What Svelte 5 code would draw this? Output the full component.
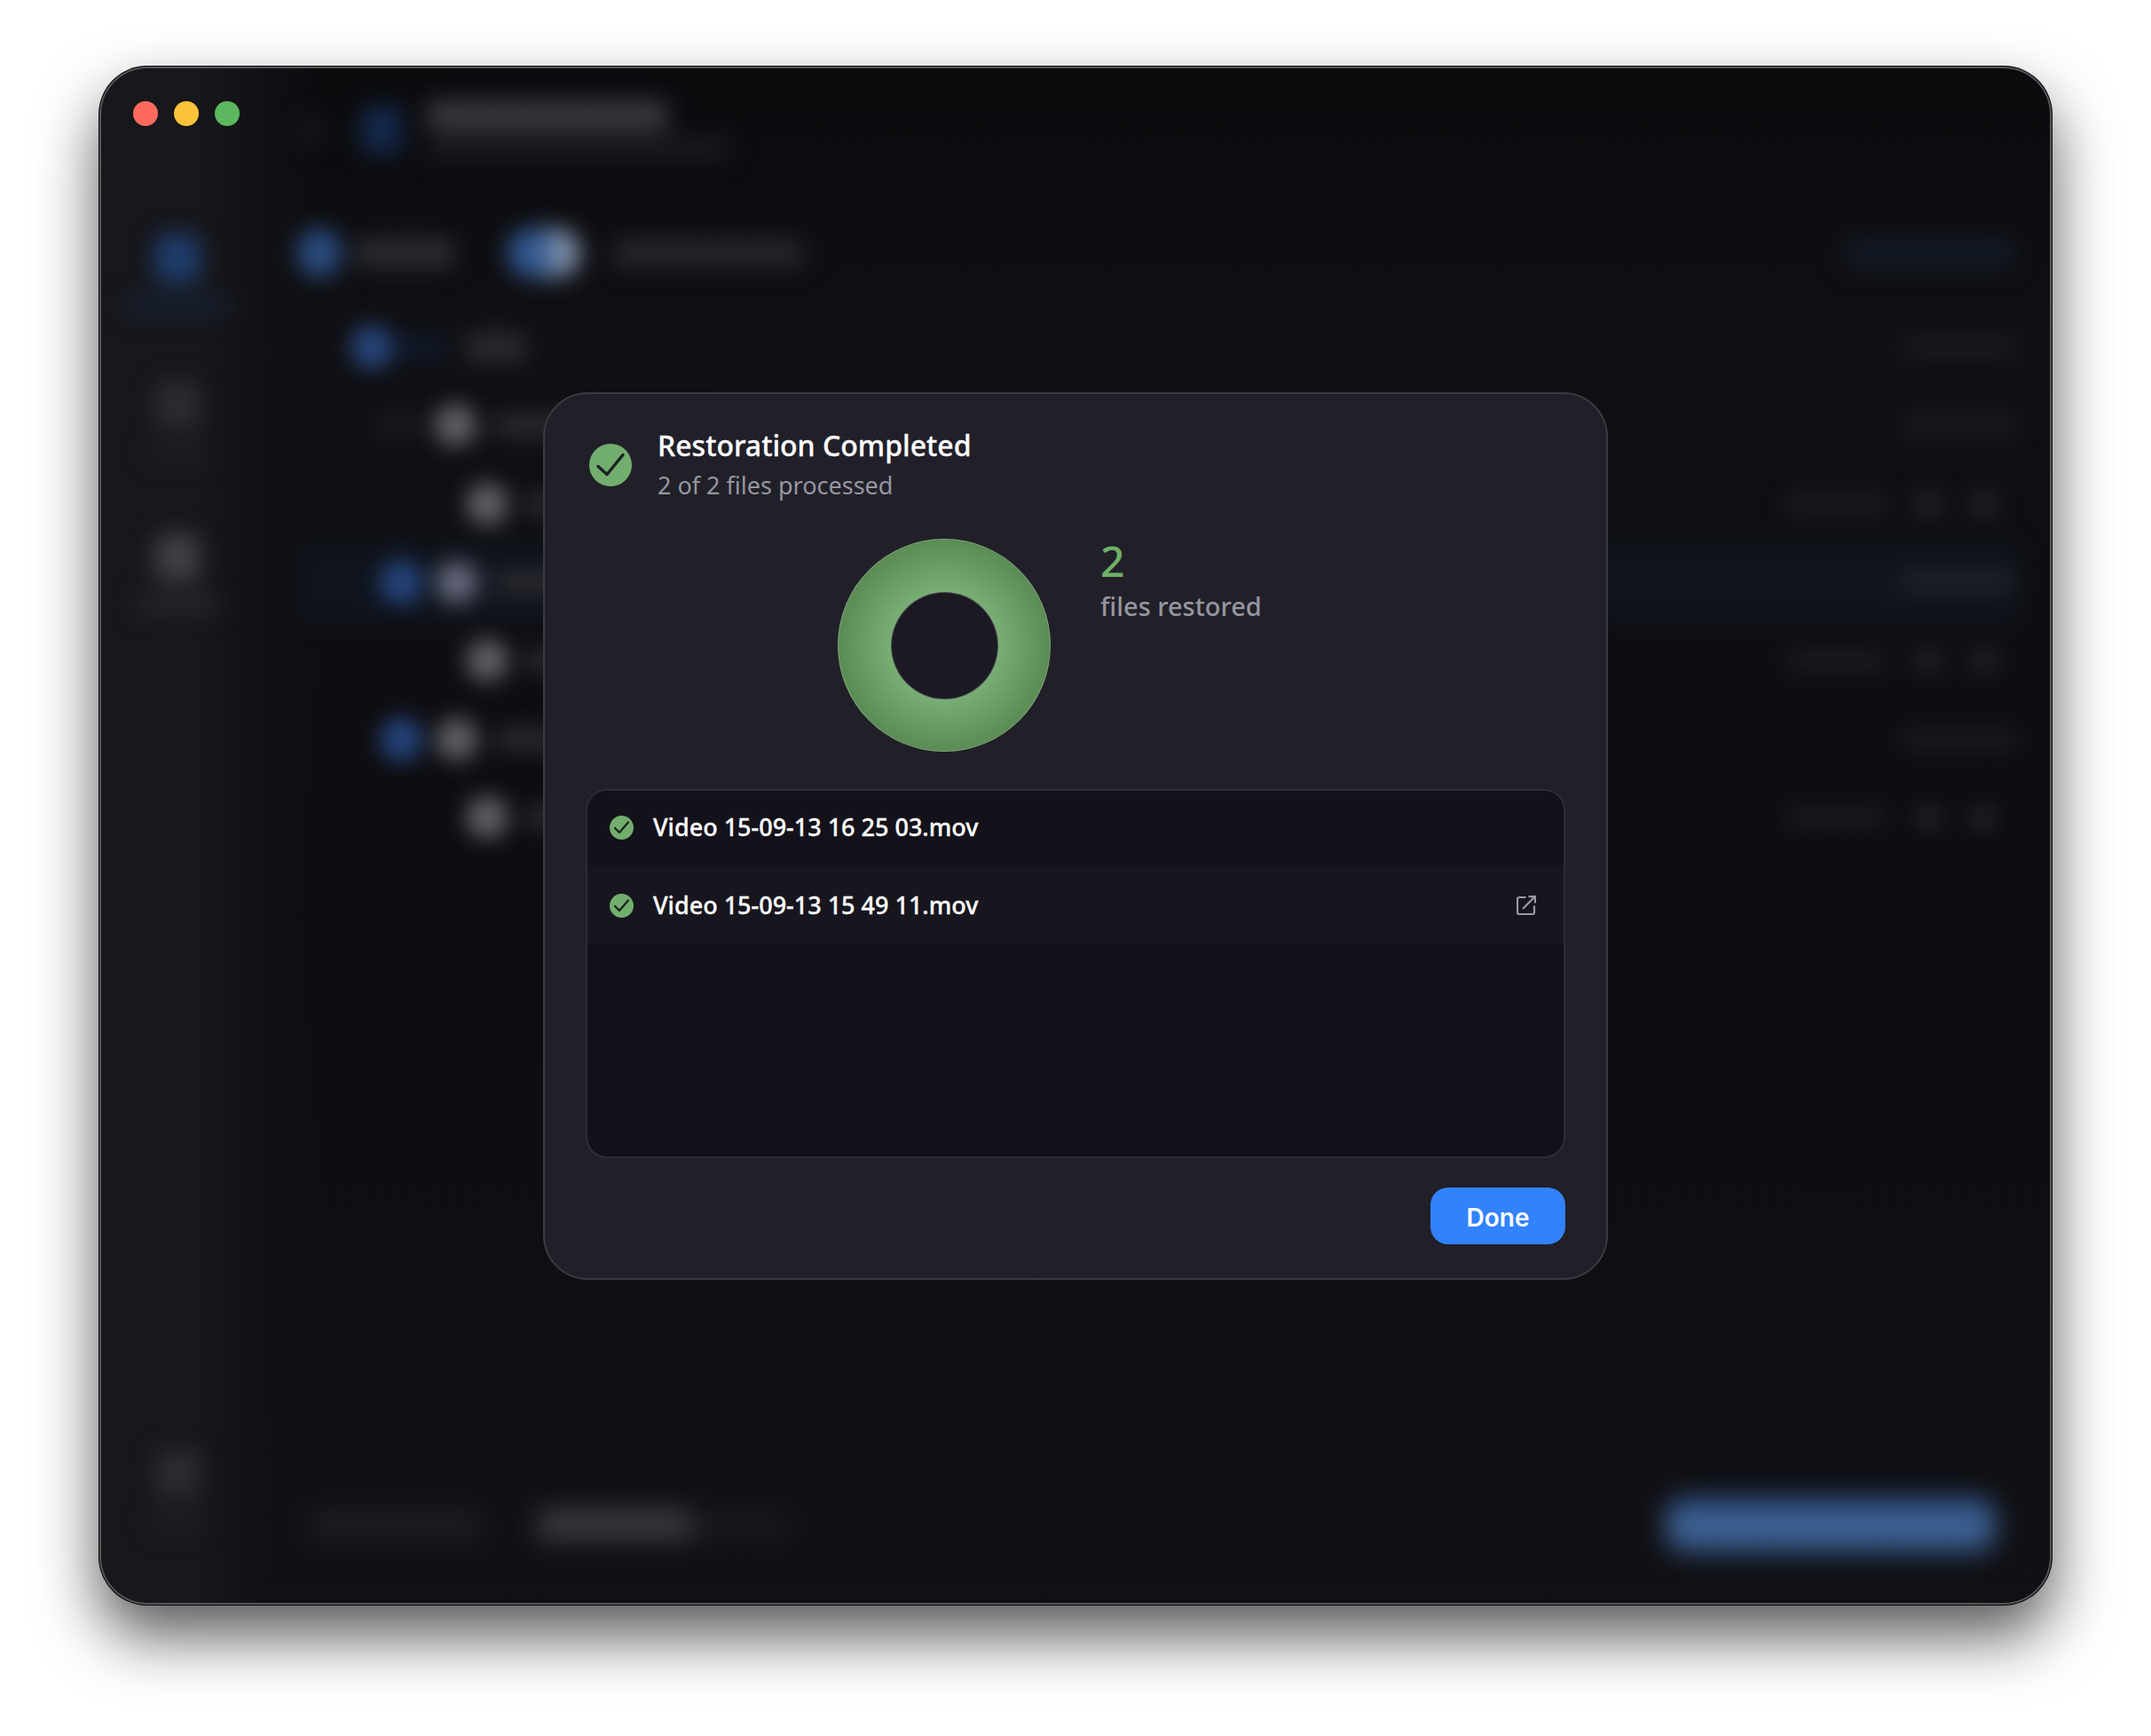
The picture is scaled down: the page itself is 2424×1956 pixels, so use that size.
<script lang="ts">
  const files = [
    { name: "Video 15-09-13 16 25 03.mov", open: false },
    { name: "Video 15-09-13 15 49 11.mov", open: true },
  ];

  // blurred tree behind the dialog
  const rows = [
    { pad: 72, kind: "root" },
    { pad: 100, kind: "folder", blue: false },
    { pad: 202, kind: "file" },
    { pad: 93, kind: "folder", blue: true, active: true },
    { pad: 202, kind: "file" },
    { pad: 105, kind: "folder", blue: true },
    { pad: 202, kind: "file" },
  ];
</script>

<div class="page">
  <div class="window">
    <aside class="sidebar">
      <div class="lights">
        <span class="light red"></span>
        <span class="light yellow"></span>
        <span class="light green"></span>
      </div>
      <nav class="nav">
        <div class="nav-item">
          <span class="nav-icon blue"></span>
          <span class="nav-label blue"></span>
        </div>
        <div class="nav-item faint">
          <span class="nav-icon"></span>
          <span class="nav-label"></span>
        </div>
        <div class="nav-item third">
          <span class="nav-icon"></span>
          <span class="nav-label"></span>
        </div>
        <div class="nav-item bottom faint">
          <span class="nav-icon"></span>
          <span class="nav-label"></span>
        </div>
      </nav>
    </aside>

    <main class="main">
      <header class="header">
        <span class="chevron"></span>
        <span class="header-icon"></span>
        <div class="header-text">
          <span class="bar title-bar"></span>
          <span class="bar sub-bar"></span>
        </div>
      </header>

      <div class="toolbar">
        <span class="tool-icon"></span>
        <span class="bar tool-text"></span>
        <span class="toggle"></span>
        <span class="bar tool-text long"></span>
        <span class="bar tool-action"></span>
      </div>

      <div class="tree">
        {#each rows as row}
          <div class="row" class:active={row.active} style="padding-left: {row.pad}px">
            {#if row.kind === "root"}
              <span class="tree-blue"></span>
              <span class="bar root-link"></span>
              <span class="root-thumb"></span>
              <span class="bar size"></span>
            {:else if row.kind === "folder"}
              {#if row.blue}
                <span class="tree-blue small"></span>
              {:else}
                <span class="bar folder-arrow"></span>
              {/if}
              <span class="thumb"></span>
              <span class="bar name"></span>
              <span class="bar size"></span>
            {:else}
              <span class="thumb"></span>
              <span class="bar name"></span>
              <span class="bar date"></span>
              <span class="dot"></span>
              <span class="dot"></span>
            {/if}
          </div>
        {/each}
      </div>

      <footer class="footer">
        <span class="bar foot-a"></span>
        <span class="bar foot-b"></span>
        <span class="bar foot-c"></span>
        <span class="foot-button"></span>
      </footer>
    </main>

    <div class="overlay">
      <section class="dialog">
        <div class="dialog-head">
          <svg class="head-check" viewBox="0 0 48 48" aria-hidden="true">
            <circle cx="24" cy="24" r="24" fill="#72ae6d" />
            <path d="M10 25.5 20 34.5 38 12.5" fill="none" stroke="#1c2226" stroke-width="3.5" stroke-linecap="round" stroke-linejoin="round" />
          </svg>
          <div>
            <h1>Restoration Completed</h1>
            <p>2 of 2 files processed</p>
          </div>
        </div>

        <div class="summary">
          <div class="donut"><span class="hole"></span></div>
          <div class="stat">
            <strong>2</strong>
            <span>files restored</span>
          </div>
        </div>

        <ul class="files">
          {#each files as file}
            <li class="file" class:open={file.open}>
              <svg class="file-check" viewBox="0 0 27 27" aria-hidden="true">
                <circle cx="13.5" cy="13.5" r="13.5" fill="#72ae6d" />
                <path d="M6 14 11 19 21 7.5" fill="none" stroke="#16201c" stroke-width="2.2" stroke-linecap="round" stroke-linejoin="round" />
              </svg>
              <span class="file-name">{file.name}</span>
              {#if file.open}
                <svg class="file-open" viewBox="0 0 22 22" aria-hidden="true">
                  <path d="M10.5 2H3a2 2 0 0 0-2 2v15a2 2 0 0 0 2 2h15a2 2 0 0 0 2-2v-7.5" fill="none" stroke="currentColor" stroke-width="2.2" />
                  <path d="M7 15 20 2M13.5 1.2H21V8.5" fill="none" stroke="currentColor" stroke-width="2.2" />
                </svg>
              {/if}
            </li>
          {/each}
        </ul>

        <div class="dialog-foot">
          <button type="button" class="done">Done</button>
        </div>
      </section>
    </div>
  </div>
</div>

<style>
  :global(body) {
    margin: 0;
    background: #fff;
  }

  .page {
    width: 2424px;
    height: 1956px;
    padding: 75px 112px 0;
    box-sizing: border-box;
    overflow: hidden;
  }

  .window {
    position: relative;
    display: flex;
    width: 2200px;
    height: 1733px;
    border-radius: 54px;
    overflow: hidden;
    background: #0e0e12;
    box-shadow:
      0 35px 70px rgba(0, 0, 0, 0.66),
      0 0 0 1px #0c0c0e;
  }

  .window::after {
    position: absolute;
    inset: 0;
    border-radius: inherit;
    box-shadow: inset 0 0 0 2px #55555a;
    content: "";
    pointer-events: none;
  }

  /* sidebar */
  .sidebar {
    display: flex;
    flex-direction: column;
    flex: 0 0 184px;
    background: linear-gradient(90deg, #17171c 60%, #111115);
  }

  .lights {
    display: flex;
    gap: 18px;
    padding: 39px 0 0 38px;
  }

  .light {
    width: 28px;
    height: 28px;
    border-radius: 50%;
  }

  .red { background: #ff6a5f; }
  .yellow { background: #fcc33a; }
  .green { background: #5cb85f; }

  .nav {
    display: flex;
    flex: 1;
    flex-direction: column;
    gap: 74px;
    padding: 122px 8px 84px 0;
    filter: blur(13px);
  }

  .nav-item {
    display: flex;
    flex-direction: column;
    align-items: center;
    gap: 15px;
  }

  .third { margin-top: 7px; }
  .bottom { margin-top: auto; }

  .nav-icon {
    width: 50px;
    height: 54px;
    border-radius: 12px;
    background: #414145;
  }

  .nav-icon.blue { background: #1f3e6e; }

  .nav-label {
    width: 90px;
    height: 22px;
    background: #26262b;
  }

  .nav-label.blue { width: 120px; background: #16202f; }

  .faint .nav-icon { background: #2c2c31; }
  .faint .nav-label { width: 64px; background: #1e1e23; }

  /* main */
  .main {
    display: flex;
    flex: 1;
    min-width: 0;
    flex-direction: column;
    background:
      linear-gradient(90deg, #111115, rgba(17, 17, 21, 0) 70px),
      linear-gradient(180deg, #0b0b0e, #101014 18%, #0d0d11 55%, #111115);
  }

  .bar {
    display: block;
    flex: none;
  }

  .header {
    display: flex;
    align-items: center;
    height: 142px;
    padding-left: 47px;
    box-sizing: border-box;
    filter: blur(13px);
  }

  .chevron {
    width: 16px;
    height: 36px;
    background: #1a1a1e;
  }

  .header-icon {
    width: 46px;
    height: 54px;
    margin-left: 48px;
    border-radius: 10px;
    background: #14294c;
  }

  .header-text {
    display: flex;
    flex-direction: column;
    gap: 8px;
    margin-left: 29px;
  }

  .title-bar {
    width: 270px;
    height: 34px;
    background: #3a3a3f;
  }

  .sub-bar {
    width: 340px;
    height: 24px;
    background: #1c1c20;
  }

  .toolbar {
    display: flex;
    align-items: center;
    height: 130px;
    padding: 6px 43px 0 39px;
    box-sizing: border-box;
    filter: blur(13px);
  }

  .tool-icon {
    width: 50px;
    height: 56px;
    border-radius: 50%;
    background: #2b4d82;
  }

  .tool-text {
    width: 109px;
    height: 32px;
    margin-left: 17px;
    background: #2e2e32;
  }

  .tool-text.long {
    width: 213px;
    margin-left: 37px;
    background: #26262b;
  }

  .toggle {
    width: 82px;
    height: 56px;
    margin-left: 61px;
    border-radius: 28px;
    background: linear-gradient(90deg, #2f5893, #34588f 45%, #8193ad 70%);
  }

  .tool-action {
    width: 189px;
    height: 36px;
    margin-left: auto;
    background: #131a25;
  }

  .tree {
    display: flex;
    flex-direction: column;
    padding: 0 39px 0 27px;
    filter: blur(12px);
  }

  .row {
    display: flex;
    align-items: center;
    height: 88.3px;
    box-sizing: border-box;
  }

  .row.active {
    margin-left: 12px;
    background: #0f141d;
  }

  .tree-blue {
    width: 48px;
    height: 50px;
    border-radius: 50%;
    background: #27457a;
  }

  .tree-blue.small {
    margin-right: 15px;
    background: #25447c;
  }

  .root-link {
    width: 56px;
    height: 28px;
    margin: 0 24px 0 3px;
    background: #10192a;
  }

  .root-thumb {
    width: 66px;
    height: 34px;
    background: #2a2a2e;
  }

  .folder-arrow {
    width: 50px;
    height: 26px;
    margin-right: 16px;
    background: #1b1b1f;
  }

  .thumb {
    flex: none;
    width: 48px;
    height: 48px;
    border-radius: 50%;
    background: #5f5f64;
  }

  .active .thumb {
    background: #63677a;
  }

  .name {
    width: 240px;
    height: 26px;
    margin-left: 20px;
    background: #2a2a2e;
  }

  .size {
    width: 130px;
    height: 24px;
    margin-left: auto;
    background: #1b1b1f;
  }

  .active .size { background: #1c212b; }

  .date {
    width: 110px;
    height: 24px;
    margin-left: auto;
    background: #1c1c20;
  }

  .dot {
    flex: none;
    width: 32px;
    height: 32px;
    margin-left: 30px;
    border-radius: 50%;
    background: #222226;
  }

  .date + .dot { margin-left: 33px; }
  .dot:last-child { margin-right: 22px; }

  .footer {
    display: flex;
    align-items: center;
    height: 180px;
    margin-top: auto;
    padding: 0 64px 0 51px;
    box-sizing: border-box;
    filter: blur(15px);
  }

  .foot-a {
    width: 195px;
    height: 30px;
    background: #1f1f23;
  }

  .foot-b {
    width: 172px;
    height: 34px;
    margin-left: 64px;
    background: #3c3c40;
  }

  .foot-c {
    width: 110px;
    height: 24px;
    background: #1c1c20;
  }

  .foot-button {
    width: 370px;
    height: 62px;
    margin-left: auto;
    border-radius: 20px;
    background: linear-gradient(180deg, #264a7e, #46699a 55%, #2c4f82);
  }

  /* dialog */
  .overlay {
    position: absolute;
    inset: 0;
    display: flex;
    align-items: center;
    justify-content: center;
  }

  .dialog {
    display: flex;
    flex-direction: column;
    width: 1200px;
    height: 1000px;
    margin-top: 1px;
    padding: 36px 46px 37px;
    box-sizing: border-box;
    border: 2px solid #3a3a42;
    border-radius: 50px;
    background: #212029;
    font-family: "Noto Sans", sans-serif;
  }

  .dialog-head {
    display: flex;
    align-items: center;
    gap: 29px;
    padding-left: 4px;
  }

  .head-check {
    flex: none;
    width: 48px;
    height: 48px;
    margin-top: 2px;
  }

  h1 {
    margin: 0;
    color: #fff;
    font-size: 32px;
    font-weight: 500;
    line-height: 44px;
    -webkit-text-stroke: 0.3px #fff;
  }

  .dialog-head p {
    margin: 3px 0 0;
    color: #96969f;
    font-size: 27px;
    line-height: 39px;
  }

  .summary {
    display: flex;
    justify-content: center;
    gap: 56px;
    margin-top: 41px;
  }

  .donut {
    position: relative;
    display: flex;
    align-items: center;
    justify-content: center;
    width: 240px;
    height: 240px;
    border-radius: 50%;
    box-sizing: border-box;
    border: 1px solid rgba(255, 255, 255, 0.22);
    background: radial-gradient(circle closest-side, #79ae75 50%, #5a8c54 100%);
  }

  .hole {
    width: 119px;
    height: 119px;
    border-radius: 50%;
    border: 1px solid rgba(255, 255, 255, 0.22);
    background: #1b1a22;
  }

  .stat {
    display: flex;
    flex-direction: column;
    width: 240px;
  }

  .stat strong {
    margin: -3px 0 3px;
    color: #6fb06a;
    font-size: 48px;
    font-weight: 500;
    line-height: 56px;
  }

  .stat span {
    color: #96969f;
    font-size: 29px;
    font-weight: 500;
    line-height: 40px;
  }

  .files {
    flex: none;
    height: 416px;
    margin: 42px 0 0;
    padding: 0;
    box-sizing: border-box;
    border: 2px solid #2e2d36;
    border-radius: 24px;
    background: #121119;
    list-style: none;
    overflow: hidden;
  }

  .file {
    display: flex;
    align-items: center;
    height: 88px;
    padding: 0 31px 0 25px;
    background: #13121a;
  }

  .file:first-child {
    margin-top: -3px;
  }

  .file.open {
    background: #17161e;
  }

  .file-check {
    flex: none;
    width: 27px;
    height: 27px;
  }

  .file-name {
    margin-left: 22px;
    color: #fff;
    font-size: 27px;
    font-weight: 500;
    line-height: 36px;
    -webkit-text-stroke: 0.3px #fff;
  }

  .file-open {
    width: 22px;
    height: 22px;
    margin-left: auto;
    color: #9a9aa2;
  }

  .dialog-foot {
    display: flex;
    justify-content: flex-end;
    margin-top: 33px;
  }

  .done {
    width: 152px;
    height: 64px;
    padding: 3px 0 0;
    border: 0;
    border-radius: 20px;
    background: #3282fc;
    color: #fff;
    font-family: Inter, sans-serif;
    font-size: 28px;
    font-weight: 600;
  }
</style>
